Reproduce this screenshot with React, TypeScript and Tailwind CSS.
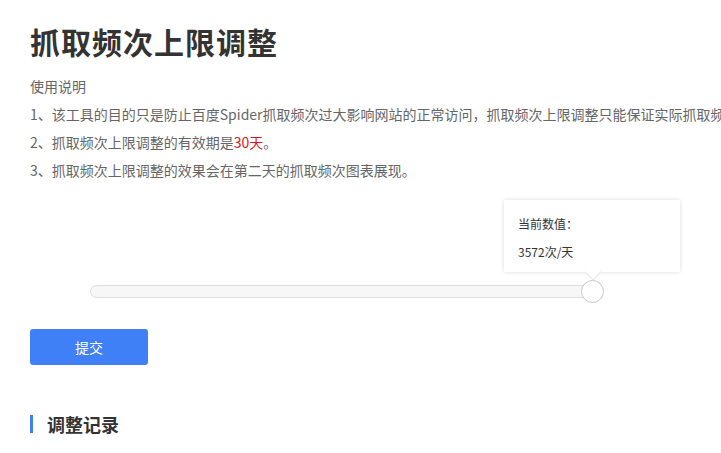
const font = "font-['Microsoft_YaHei','Noto_Sans_CJK_SC',sans-serif]";

const notes = [
  <>1、该工具的目的只是防止百度Spider抓取频次过大影响网站的正常访问，抓取频次上限调整只能保证实际抓取频次不会超过设置值。</>,
  <>
    2、抓取频次上限调整的有效期是<span className="text-[#e3131b]">30天</span>。
  </>,
  <>3、抓取频次上限调整的效果会在第二天的抓取频次图表展现。</>,
];

function Slider() {
  return (
    <div className="relative ml-[60px] mt-[101px] h-[13px] w-[510px] rounded-full border border-[#dcdcdc] bg-[#f7f7f7]">
      {/* tooltip */}
      <div className="absolute left-[413px] top-[-86px] h-[72px] w-[176px] bg-white px-[14px] pt-[10px] text-[12px] leading-[28px] text-[#333] shadow-[0_0_4px_rgba(0,0,0,0.15)]">
        <div>当前数值：</div>
        <div>3572次/天</div>
        <div className="absolute bottom-[-6px] left-[83px] h-[12px] w-[12px] rotate-45 border-b border-r border-[#e6e6e6] bg-white" />
      </div>
      <div className="absolute left-[490px] top-[-6px] h-[23px] w-[23px] rounded-full border border-[#c8c8c8] bg-white" />
    </div>
  );
}

export default function App() {
  return (
    <div className={`min-h-screen overflow-hidden bg-white px-[30px] ${font}`}>
      <h1 className="pt-[21px] text-[30px] font-bold leading-[40px] tracking-[1px] text-[#333]">
        抓取频次上限调整
      </h1>
      <div className="mt-[11px] whitespace-nowrap text-[14px] leading-[28px] text-[#666]">
        <p>使用说明</p>
        {notes.map((n, i) => (
          <p key={i}>{n}</p>
        ))}
      </div>
      <Slider />
      <button className="mt-[31px] h-[36px] w-[118px] rounded-[3px] bg-[#4080f7] text-[14px] text-white">
        提交
      </button>
      <div className="mt-[49px] flex items-center gap-[14px]">
        <span className="h-[18px] w-[3px] bg-[#4080f7]" />
        <h2 className="text-[18px] font-bold leading-[20px] text-[#333]">调整记录</h2>
      </div>
    </div>
  );
}
